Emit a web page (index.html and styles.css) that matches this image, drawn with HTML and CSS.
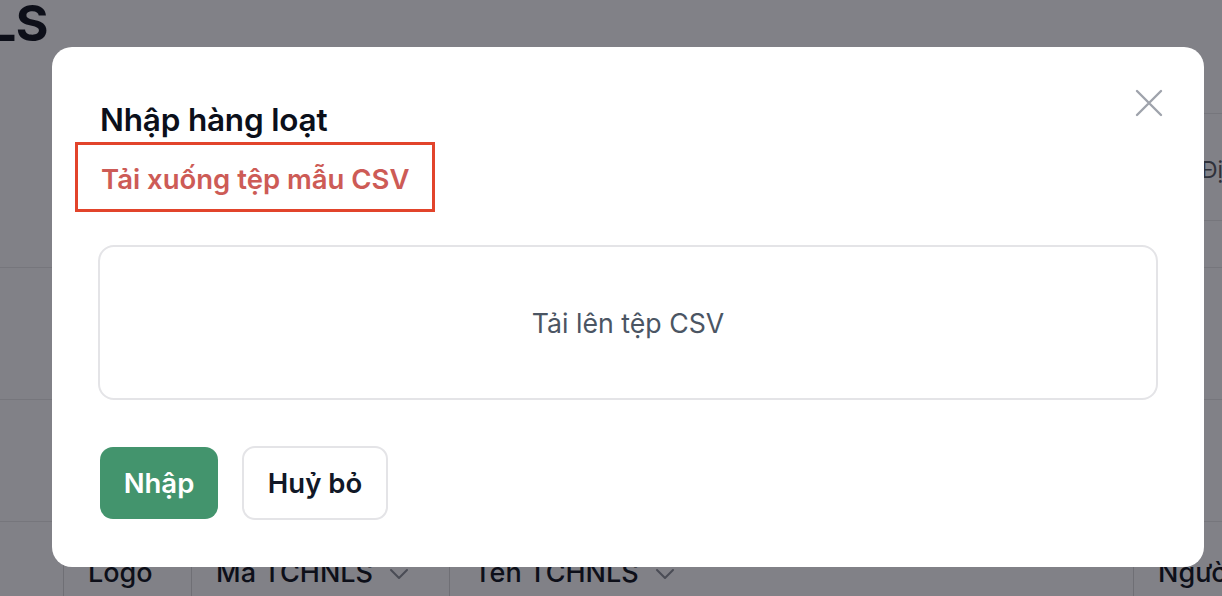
FILE: index.html
```html
<!DOCTYPE html>
<html lang="vi">
<head>
<meta charset="utf-8">
<title>Nhập hàng loạt</title>
<link rel="stylesheet" href="styles.css">
</head>
<body>
<div class="page">
  <div class="top">
    <div class="title-clip"><h1 class="page-title">Danh sách TCHNLS</h1></div>
    <div class="side-card">
      <div class="side-spacer"></div>
      <div class="side-head"><span class="side-label">Địa chỉ</span></div>
    </div>
  </div>
  <div class="row row-a"></div>
  <div class="row row-b"></div>
  <div class="thead">
    <div class="th th-first"></div>
    <div class="th th-logo">Logo</div>
    <div class="th th-code">Mã TCHNLS
      <svg class="chev" viewBox="0 0 20 12" width="20" height="12"><path d="M2 2 L10 10 L18 2" fill="none" stroke="#4a4c55" stroke-width="2" stroke-linecap="round" stroke-linejoin="round"/></svg>
    </div>
    <div class="th th-name">Tên TCHNLS
      <svg class="chev" viewBox="0 0 20 12" width="20" height="12"><path d="M2 2 L10 10 L18 2" fill="none" stroke="#4a4c55" stroke-width="2" stroke-linecap="round" stroke-linejoin="round"/></svg>
    </div>
    <div class="th th-person">Người tạo</div>
  </div>
</div>

<div class="overlay">
  <div class="modal" role="dialog">
    <button class="close" aria-label="Đóng">
      <svg viewBox="0 0 28 28" width="28" height="28"><path d="M2 2 L26 26 M26 2 L2 26" fill="none" stroke="#9fa3ac" stroke-width="2.4" stroke-linecap="round"/></svg>
    </button>
    <h2 class="modal-title">Nhập hàng loạt</h2>
    <div class="link-row"><a class="template-link" href="#">Tải xuống tệp mẫu CSV</a></div>
    <div class="dropzone">Tải lên tệp CSV</div>
    <div class="actions">
      <button class="btn btn-primary">Nhập</button>
      <button class="btn btn-secondary">Huỷ bỏ</button>
    </div>
  </div>
</div>
</body>
</html>
```

FILE: styles.css
```css
* { box-sizing: border-box; }

html, body {
  margin: 0;
  padding: 0;
}

body {
  width: 1222px;
  height: 596px;
  overflow: hidden;
  background: #818187;
  font-family: Inter, "Noto Sans", "Liberation Sans", sans-serif;
  color: #0d0f19;
}

.page {
  display: flex;
  flex-direction: column;
  width: 1222px;
}

.top {
  display: flex;
  height: 267px;
}

.title-clip {
  width: 48px;
  height: 60px;
  overflow: hidden;
  display: flex;
  justify-content: flex-end;
}

.page-title {
  margin: 0;
  font-size: 50px;
  font-weight: 700;
  line-height: 1;
  margin-top: -2px;
  white-space: nowrap;
  letter-spacing: -0.5px;
  color: #0d0f19;
  flex: none;
}

.side-card {
  margin-left: auto;
  width: 400px;
  display: flex;
  flex-direction: column;
  overflow: hidden;
}

.side-spacer { height: 113px; }

.side-head {
  height: 108px;
  border-top: 1px solid #76767c;
  border-bottom: 1px solid #76767c;
  display: flex;
  align-items: center;
  padding-left: 379px;
  padding-top: 6px;
  white-space: nowrap;
}

.side-label {
  font-size: 23px;
  color: #2f313a;
}

.row {
  border-top: 1px solid #76767c;
}
.row-a { height: 132px; }
.row-b { height: 122px; }

.thead {
  display: flex;
  height: 75px;
  border-top: 1px solid #76767c;
  white-space: nowrap;
  overflow: hidden;
}

.th {
  display: flex;
  align-items: center;
  gap: 16px;
  padding-left: 24px;
  padding-top: 27px;
  font-size: 27px;
  font-weight: 500;
  color: #0d0f19;
  border-left: 1px solid #6f6f75;
  flex: none;
}
.th-first { width: 63px; border-left: none; padding-left: 0; }
.th-logo { width: 128px; }
.th-code { width: 258px; }
.th-name { width: 684px; }
.th-person { width: 200px; }

.chev { flex: none; margin-top: 2px; }

/* Modal */
.overlay {
  position: fixed;
  inset: 0;
  padding: 47px 0 0 52px;
}

.modal {
  position: relative;
  width: 1152px;
  background: #ffffff;
  border-radius: 20px;
  padding: 55px 46px 47px 48px;
  display: flex;
  flex-direction: column;
}

.close {
  position: absolute;
  top: 42px;
  right: 41px;
  width: 28px;
  height: 28px;
  padding: 0;
  border: none;
  background: none;
  display: flex;
}

.modal-title {
  margin: 0;
  font-size: 31.5px;
  line-height: 36px;
  font-weight: 600;
  color: #0b0f1a;
  letter-spacing: -0.2px;
  white-space: nowrap;
}

.link-row {
  margin-top: 4px;
  margin-left: -25px;
  display: flex;
}

.template-link {
  display: block;
  width: 360px;
  height: 70px;
  border: 3px solid #e2442b;
  padding: 18px 0 0 23px;
  font-size: 27.5px;
  line-height: 32px;
  font-weight: 600;
  color: #cd5b56;
  text-decoration: none;
  white-space: nowrap;
}

.dropzone {
  margin-top: 33px;
  margin-left: -2px;
  height: 155px;
  border: 2px solid #e4e4e7;
  border-radius: 16px;
  display: flex;
  align-items: center;
  justify-content: center;
  font-size: 26.7px;
  color: #4b5563;
}

.actions {
  margin-top: 46px;
  display: flex;
  align-items: center;
  gap: 24px;
}

.btn {
  font-family: inherit;
  font-size: 27.5px;
  font-weight: 600;
  border-radius: 13px;
  cursor: pointer;
  padding: 0;
}

.btn-primary {
  height: 72px;
  width: 118px;
  border: none;
  background: #43946d;
  color: #ffffff;
}

.btn-secondary {
  height: 74px;
  width: 146px;
  border: 2px solid #e4e4e7;
  background: #ffffff;
  color: #111827;
}
```
